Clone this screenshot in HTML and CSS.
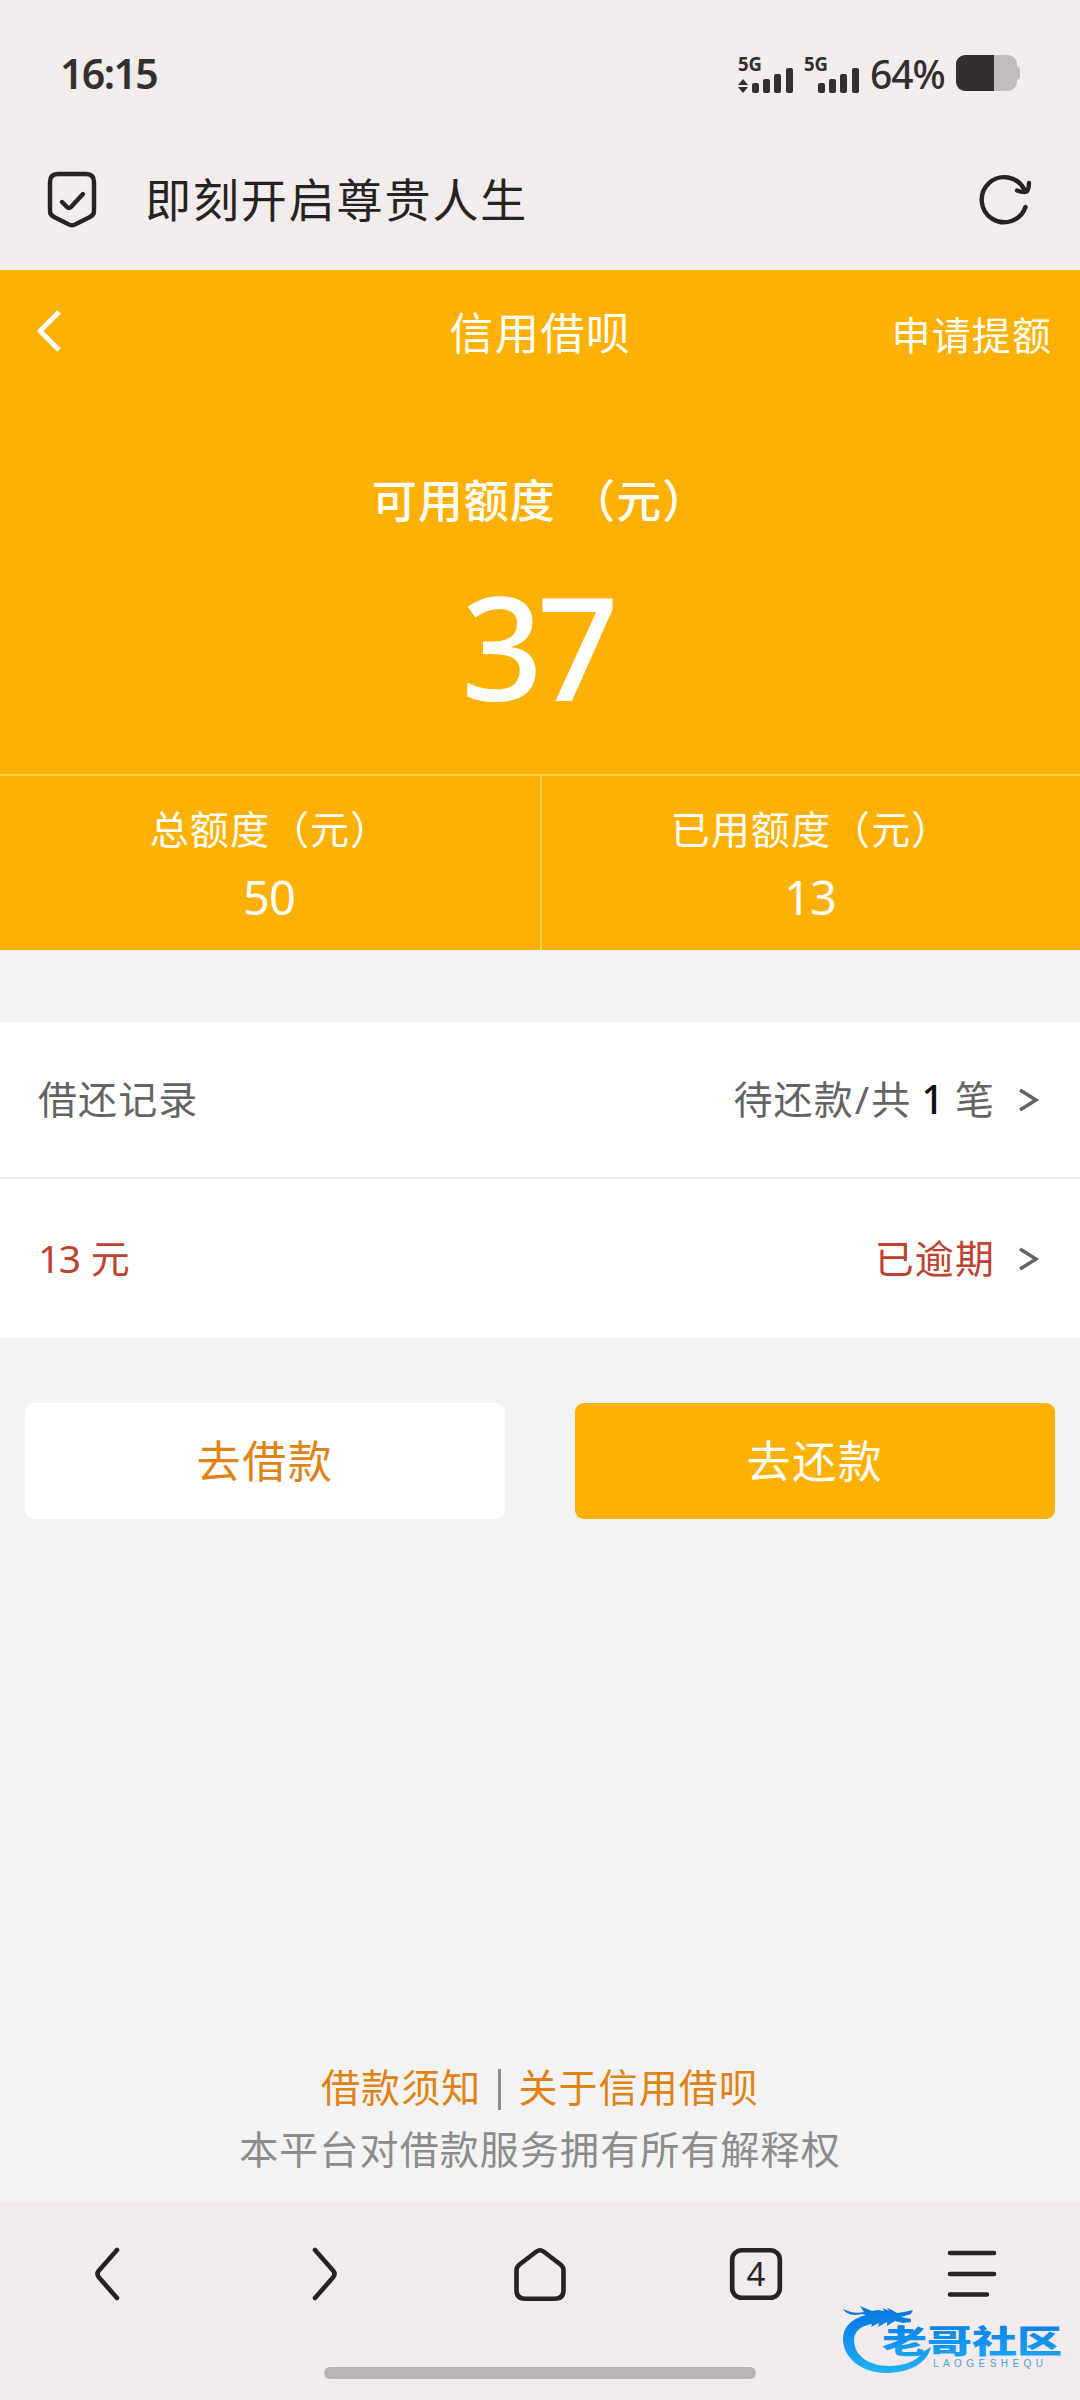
FILE: index.html
```html
<!DOCTYPE html>
<html lang="zh-CN">
<head>
<meta charset="utf-8">
<title>即刻开启尊贵人生</title>
<link rel="stylesheet" href="styles.css">
</head>
<body>
<header class="chrome">
  <div class="status">
    <span class="clock">16:15</span>
    <div class="indicators">
      <svg class="signal" width="122" height="52" viewBox="0 -8 122 52">
        <g fill="#322f2e">
          <text class="net" x="0" y="16" textLength="24" lengthAdjust="spacingAndGlyphs">5G</text>
          <path d="M5 24l5 6H0zM0 32h10l-5 6z"/>
          <rect x="14" y="28" width="7" height="10" rx="2"/><rect x="25" y="24" width="7" height="14" rx="2"/><rect x="36" y="19" width="7" height="19" rx="2"/><rect x="48" y="13" width="7" height="25" rx="2"/>
          <text class="net" x="66" y="16" textLength="24" lengthAdjust="spacingAndGlyphs">5G</text>
          <rect x="80" y="28" width="7" height="10" rx="2"/><rect x="91" y="24" width="7" height="14" rx="2"/><rect x="102" y="19" width="7" height="19" rx="2"/><rect x="114" y="13" width="7" height="25" rx="2"/>
        </g>
      </svg>
      <span class="percent">64%</span>
      <svg width="64" height="36" viewBox="0 0 64 36">
        <path fill="#c1bdbc" d="M38 0h14a9 9 0 0 1 9 9v2q3 1 3 4v6q0 3-3 4v2a9 9 0 0 1-9 9H38z"/>
        <path fill="#322f2e" d="M9 0h29v36H9a9 9 0 0 1-9-9V9a9 9 0 0 1 9-9z"/>
      </svg>
    </div>
  </div>
  <div class="address">
    <svg width="50" height="56" viewBox="0 0 50 56" fill="none" stroke="#262322" stroke-width="4.4" stroke-linecap="round" stroke-linejoin="round">
      <path d="M11 3h28q8 0 8 8v29q0 4-4 6L29 53q-4 2.500-8 0L7 46q-4-2-4-6V11q0-8 8-8z"/>
      <path d="M15 31l5 5q2 2 4 0L36 23"/>
    </svg>
    <h1 class="page-title">即刻开启尊贵人生</h1>
    <svg class="reload" width="52" height="52" viewBox="0 0 52 52" fill="none" stroke="#262322" stroke-width="4.400" stroke-linecap="round" stroke-linejoin="round">
      <path d="M46.500 34A22.500 22.500 0 1 1 45 16"/>
      <path d="M38 17.500q9 3 10.500 0T50 10"/>
    </svg>
  </div>
</header>

<main class="page">
  <section class="credit">
    <nav class="topbar">
      <svg width="28" height="44" viewBox="0 0 28 44" fill="none" stroke="#fff" stroke-width="5" stroke-linejoin="round"><path d="M24 2L5 21L24 40"/></svg>
      <span class="brand">信用借呗</span>
      <span class="raise">申请提额</span>
    </nav>
    <div class="available">可用额度 <span class="unit">（元）</span></div>
    <div class="amount">37</div>
    <div class="totals">
      <div class="total"><span class="total-label">总额度（元）</span><span class="total-value">50</span></div>
      <div class="total"><span class="total-label">已用额度（元）</span><span class="total-value">13</span></div>
    </div>
  </section>

  <section class="records">
    <div class="row">
      <span>借还记录</span>
      <span class="row-end"><span>待还款<span class="slash">/</span>共<b class="count">1</b>笔</span><svg class="chevron" width="22" height="24" viewBox="0 0 22 24"><path d="M2 4L18 14L2 24"/></svg></span>
    </div>
    <div class="row">
      <span class="overdue"><span class="sum">13</span>元</span>
      <span class="row-end"><span class="overdue">已逾期</span><svg class="chevron" width="22" height="24" viewBox="0 0 22 24"><path d="M2 4L18 14L2 24"/></svg></span>
    </div>
  </section>

  <div class="actions">
    <button class="btn btn-light">去借款</button>
    <button class="btn btn-solid">去还款</button>
  </div>

  <footer class="notes">
    <div class="links"><span>借款须知</span><i class="bar"></i><span>关于信用借呗</span></div>
    <div>本平台对借款服务拥有所有解释权</div>
  </footer>
</main>

<footer class="toolbar">
  <div class="tools">
    <svg class="tool" viewBox="0 0 60 60"><path d="M39 6L21 26.500Q18 30 21 33.500L39 54"/></svg>
    <svg class="tool" viewBox="0 0 60 60"><path d="M21 6L39 26.500Q42 30 39 33.500L21 54"/></svg>
    <svg class="tool" viewBox="0 0 60 60"><path d="M26.500 7.500Q30 5 33.500 7.500L50.500 20.500Q53.500 23 53.500 26V46Q53.500 54.700 45 54.700H15Q6.500 54.700 6.500 46V26Q6.500 23 9.500 20.500Z"/></svg>
    <svg class="tool" viewBox="0 0 60 60"><rect x="6.200" y="6.200" width="47.600" height="47.600" rx="9.500"/><text class="tabs" x="30" y="42" text-anchor="middle">4</text></svg>
    <svg class="tool" viewBox="0 0 60 60"><path d="M8 9H52M8 30H52M8 50.500H45"/></svg>
  </div>
  <div class="home-bar"></div>
  <svg class="stamp" width="228" height="80" viewBox="0 0 228 80">
    <defs>
      <linearGradient id="blue" gradientUnits="userSpaceOnUse" x1="0" y1="8" x2="0" y2="70"><stop offset="0" stop-color="#0a78dc"/><stop offset=".45" stop-color="#1090ee"/><stop offset="1" stop-color="#22b0f8"/></linearGradient>
    </defs>
    <path fill="url(#blue)" d="M26 13C10 17 3 26 3 37c0 19 19 34 43 34 22 0 41-9 45-26l-8 5c-6 9-19 14-34 14C28 64 14 53 14 38c0-8 6-14 18-16l-1 3 8-4-1 4 9-5v4l8-5 8 2 8-1v-3l-10-2 10-3 2-4-9 2-7 1-5-3-5-2 2 3-6-3 1 3-6-1-6 1-12-5 4 6c-8 2-14 0-21-3 4 6 11 7 19 5z"/>
    <text class="stamp-name" x="42" y="51" textLength="180" lengthAdjust="spacingAndGlyphs" fill="url(#blue)">老哥社区</text>
    <text class="stamp-sub" x="93" y="65" textLength="110">LAOGESHEQU</text>
  </svg>
</footer>
</body>
</html>
```
FILE: styles.css
```css
* { box-sizing: border-box; }

body {
  margin: 0;
  width: 1080px;
  height: 2400px;
  display: flex;
  flex-direction: column;
  overflow: hidden;
  background: #f3f3f3;
  color: #646464;
  font-family: "Noto Sans", "Noto Sans CJK SC", sans-serif;
  font-size: 39px;
  line-height: 1;
  letter-spacing: 1.100px;
}

svg { display: block; flex: none; overflow: visible; }

/* Browser chrome: status bar and address bar */
.chrome { height: 270px; background: #f2ecec; color: #262322; }

.status {
  height: 146px;
  padding: 0 60px 0 60px;
  display: flex;
  align-items: center;
  justify-content: space-between;
  color: #322f2e;
}

.clock { font-size: 41px; font-weight: 600; letter-spacing: -1.600px; }
.indicators { display: flex; align-items: center; gap: 11px; }
.signal { margin: 0 -1px 0 0; }
.net { font: 700 20px "Noto Sans", sans-serif; letter-spacing: 0; }
.percent { font-size: 39px; font-weight: 500; letter-spacing: -1px; width: 75px; }

.address {
  height: 106px;
  padding: 0 49px 0 47px;
  display: flex;
  align-items: center;
}

.page-title {
  margin: 0 auto 0 48px;
  font-size: 46px;
  font-weight: 400;
  letter-spacing: 1.900px;
}

/* Credit summary */
.page { height: 1932px; display: flex; flex-direction: column; }
.credit { height: 680px; background: #ffb103; color: #fff; display: flex; flex-direction: column; }

.topbar {
  flex: none;
  height: 126px;
  padding: 0 28px 2px 35px;
  display: grid;
  grid-template-columns: 1fr auto 1fr;
  align-items: center;
}

.brand { font-size: 44px; letter-spacing: 1.600px; margin-right: 6px; padding-top: 2px; }
.raise { justify-self: end; padding-top: 4px; }
.available { flex: none; margin-top: 81px; text-align: center; font-size: 45px; line-height: 48px; font-weight: 500; letter-spacing: 1px; }
.unit { margin-left: 2px; }
.amount { flex: 1; padding: 0 6px 8px 0; display: flex; align-items: center; justify-content: center; font-size: 143px; font-weight: 500; letter-spacing: -6px; }

.totals { flex: none; height: 176px; display: grid; grid-template-columns: 1fr 1fr; border-top: 2px solid #ffd04e; }
.total { padding-top: 31px; display: flex; flex-direction: column; align-items: center; gap: 22px; }
.total + .total { border-left: 2px solid #ffd04e; }
.total-label { line-height: 44px; }
.total-value { font-size: 47px; line-height: 48px; letter-spacing: -1px; margin-right: 2px; }

/* Borrowing records */
.records { margin-top: 72px; height: 316px; background: #fff; }
.row { height: 155px; padding: 0 40px 3px 38px; display: flex; align-items: center; justify-content: space-between; }
.row + .row { height: 161px; border-top: 2px solid #ebebeb; }
.row-end { display: flex; align-items: center; gap: 23px; }
.slash { margin: 0 1px; }
.count { margin: 0 10px; color: #111; font-weight: 500; }
.sum { margin-right: 11px; letter-spacing: -1.500px; }
.overdue { color: #bf4130; }
.chevron { fill: none; stroke: #646464; stroke-width: 3.500; }

/* Actions */
.actions { margin-top: 65px; padding: 0 25px; display: grid; grid-template-columns: 1fr 1fr; gap: 70px; }
.btn { height: 116px; border: 0; border-radius: 9px; font: inherit; font-size: 44px; letter-spacing: 1.600px; padding-bottom: 2px; }
.btn-light { background: #fff; color: #e08314; }
.btn-solid { background: #ffb103; color: #fff; }

/* Notes */
.notes { margin-top: auto; height: 138px; display: flex; flex-direction: column; align-items: center; gap: 17px; color: #8c8c8c; line-height: 44px; }
.links { display: flex; align-items: center; gap: 17px; color: #e08314; }
.bar { width: 3px; height: 41px; margin-top: 5px; background: #8c8c8c; }

/* Browser toolbar */
.toolbar { position: relative; height: 198px; background: #f1ebeb; }
.tools { height: 144px; display: grid; grid-template-columns: repeat(5, 216px); justify-items: center; align-items: center; }
.tool { width: 60px; height: 60px; fill: none; stroke: #262322; stroke-width: 4.600; stroke-linecap: round; stroke-linejoin: round; }
.tabs { fill: #262322; stroke: none; font-size: 33px; letter-spacing: 0; }
.home-bar { width: 432px; height: 12px; margin: 21px auto 0; border-radius: 6px; background: #b8b4b3; }

.stamp { position: absolute; left: 840px; top: 100px; }
.stamp-name { font: 900 32px "Noto Sans CJK SC", sans-serif; letter-spacing: 0; }
.stamp-sub { font: 10px "Liberation Sans", sans-serif; letter-spacing: 0; fill: #4aa0e0; }
```
